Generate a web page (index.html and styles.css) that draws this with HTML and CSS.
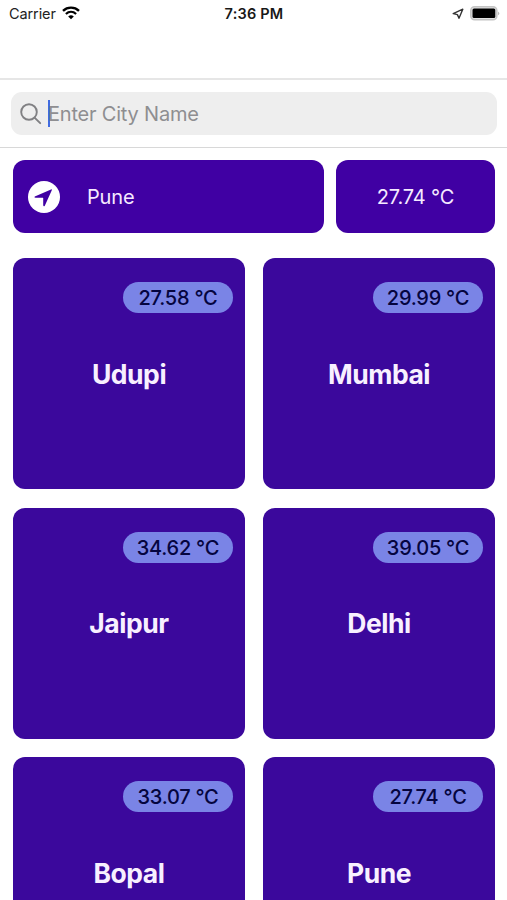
FILE: index.html
```html
<!DOCTYPE html>
<html lang="en">
<head>
<meta charset="utf-8">
<title>Weather</title>
<link rel="stylesheet" href="styles.css">
</head>
<body>
<header class="status">
  <div class="carrier"><span>Carrier</span>
    <svg class="wifi" viewBox="0 0 18 14"><path d="M1 4.800C5.500.6 12.500.6 17 4.800" fill="none" stroke="#000" stroke-width="2.400"/><path d="M3.900 8C6.900 5.200 11.100 5.200 14.100 8" fill="none" stroke="#000" stroke-width="2.200"/><path d="M6.200 10.400Q9 8.200 11.800 10.400L9 13.300Z"/></svg>
  </div>
  <time class="clock">7:36 PM</time>
  <div class="indicators">
    <svg class="arrow" viewBox="0 0 12 12"><path d="M1.200 5.600 10.800 1.200 7 10.300 5.400 6.600Z" fill="none" stroke="#333" stroke-width="1.400" stroke-linejoin="round"/></svg>
    <svg class="battery" viewBox="0 0 30 15"><rect x=".8" y=".8" width="26" height="13" rx="3.800" fill="#e4e4e4" stroke="#c4c4c4" stroke-width="1.600"/><rect x="2.500" y="2.500" width="22.800" height="9.600" rx="1.500"/><path d="M28.200 5.500Q30.300 7.400 28.200 9.300Z" fill="#aaa"/></svg>
  </div>
</header>
<div class="search">
  <div class="field">
    <svg class="lens" viewBox="0 0 22 22"><circle cx="9" cy="9" r="7.800"/><path d="m14.800 14.800 5.400 5.400"/></svg>
    <span class="caret"></span><span class="placeholder">Enter City Name</span>
  </div>
</div>
<main>
  <section class="current">
    <div class="place"><svg class="locate" viewBox="0 0 32 32"><circle cx="16" cy="16" r="16" fill="#fff"/><path d="M6.800 15.600 23 8.500Q24.300 8 23.800 9.300L16.800 24.700Q15.600 26.200 15.200 24.300V17.100Q15.200 16.800 14.800 16.800H7.500Q5.500 16.500 6.800 15.600Z" fill="#4000a3"/></svg><span>Pune</span></div>
    <div class="now"><span>27.74 °C</span></div>
  </section>
  <section class="cities">
    <article class="card"><span class="temp">27.58 °C</span><h2>Udupi</h2></article>
    <article class="card"><span class="temp">29.99 °C</span><h2>Mumbai</h2></article>
    <article class="card"><span class="temp">34.62 °C</span><h2>Jaipur</h2></article>
    <article class="card"><span class="temp">39.05 °C</span><h2>Delhi</h2></article>
    <article class="card"><span class="temp">33.07 °C</span><h2>Bopal</h2></article>
    <article class="card"><span class="temp">27.74 °C</span><h2>Pune</h2></article>
  </section>
</main>
</body>
</html>
```
FILE: styles.css
```css
* { box-sizing: border-box; }
body { margin: 0; height: 900px; overflow: hidden; background: #fff; font-family: Inter, sans-serif; color: #000; }
svg { display: block; flex: none; }
.status { height: 78px; padding: 4px 7px 0 9px; display: grid; grid-template-columns: 1fr auto 1fr; align-items: start; font-size: 14.5px; line-height: 19px; }
.carrier { display: flex; gap: 6px; color: #222; letter-spacing: -.1px; }
.wifi { width: 18px; height: 14px; margin-top: 2px; }
.clock { font-weight: 600; color: #181818; letter-spacing: .2px; margin-right: 1px; }
.indicators { display: flex; justify-content: flex-end; gap: 6px; }
.arrow { width: 12px; height: 12px; margin-top: 4px; }
.battery { width: 30px; height: 15px; margin-top: 2px; }
.search { height: 70px; padding: 12px 10px 0 11px; border-top: 2px solid #e6e6e6; border-bottom: 1px solid #d8d8d8; }
.field { height: 43px; border-radius: 11px; background: #eee; display: flex; align-items: center; padding-left: 9px; }
.lens { width: 22px; height: 22px; fill: none; stroke: #808083; stroke-width: 1.9; stroke-linecap: round; }
.caret { width: 2px; height: 27px; margin: 0 -2px 0 6px; background: #416be0; }
.placeholder { color: #8e8e91; font-size: 20px; letter-spacing: -.2px; }
main { height: 752px; overflow: hidden; padding: 12px 12px 0 13px; }
.current { display: flex; gap: 12px; height: 73px; font-size: 20px; letter-spacing: -.15px; color: #f5eaff; }
.place, .now { display: flex; align-items: center; border-radius: 12px; background: #4000a3; }
.place { width: 311px; padding-left: 15px; gap: 27px; }
.now { flex: 1; justify-content: center; }
.locate { width: 32px; height: 32px; }
.cities { display: grid; grid-template-columns: 232px 232px; gap: 18.5px 18px; margin-top: 24.9px; }
.card { height: 231.2px; padding: 24px 12px 0; border-radius: 12px; background: #3b089c; display: flex; flex-direction: column; align-items: center; }
.temp { align-self: flex-end; width: 110px; height: 31px; border-radius: 16px; background: #7a84e6; color: #05053f; font-size: 20px; font-weight: 450; letter-spacing: -.25px; line-height: 32px; text-align: center; }
h2 { margin: 42.9px 0 0; font-size: 26.5px; line-height: 36px; font-weight: 650; letter-spacing: -.45px; color: #f8f0ff; }
```
